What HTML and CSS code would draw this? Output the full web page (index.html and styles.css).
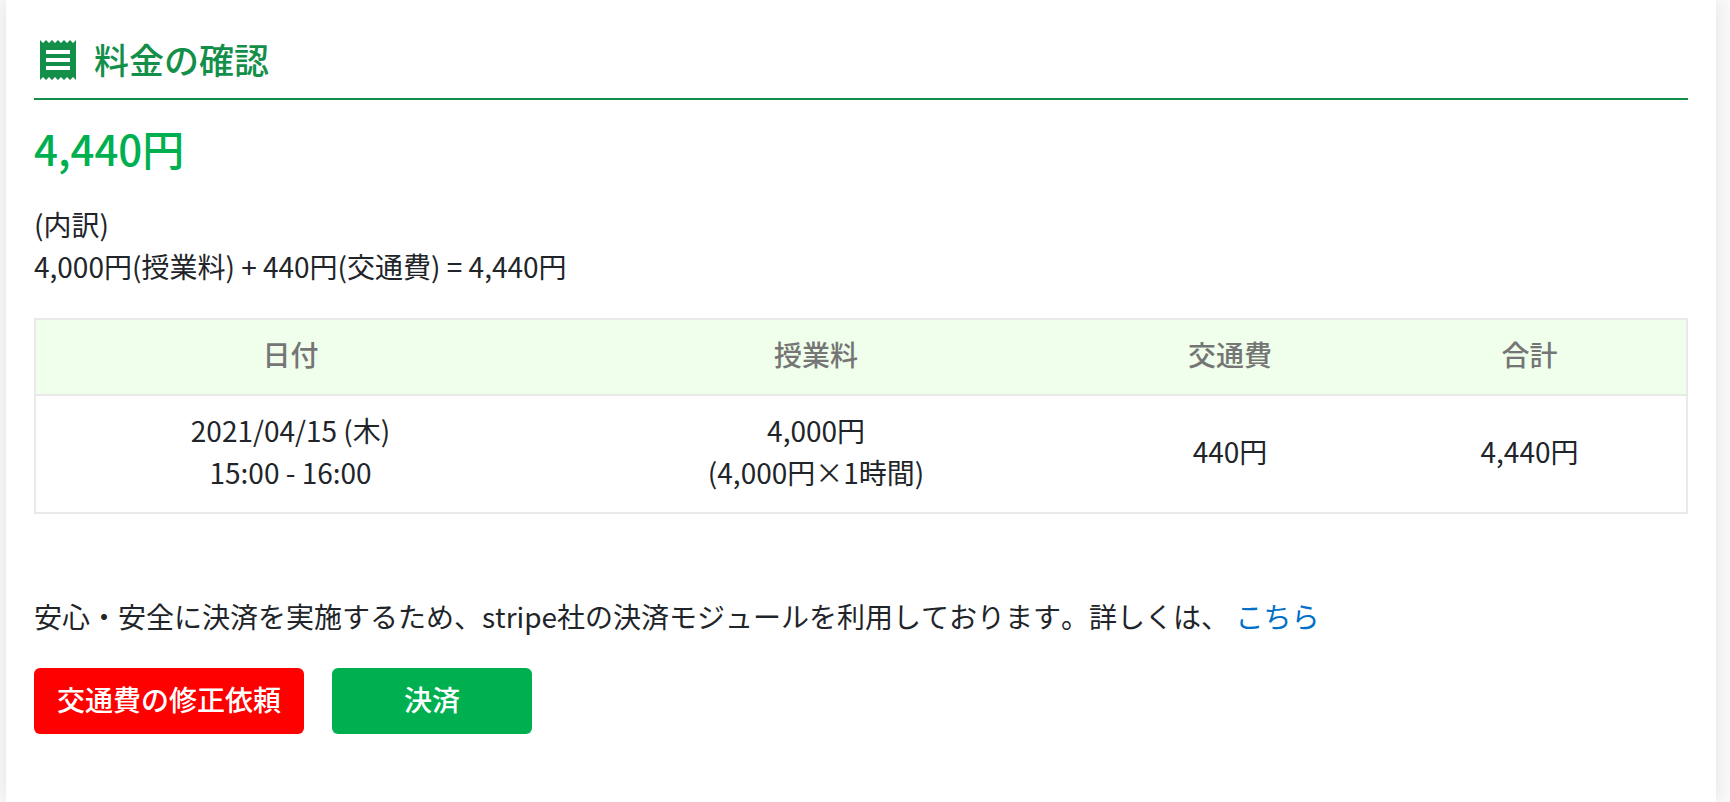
FILE: index.html
```html
<!DOCTYPE html>
<html lang="ja">
<head>
<meta charset="utf-8">
<meta name="viewport" content="width=device-width, initial-scale=1">
<title>料金の確認</title>
<link rel="stylesheet" href="styles.css">
</head>
<body>
<main class="card">
  <h1 class="card-title">
    <svg class="card-icon" viewBox="0 0 24 24" aria-hidden="true"><path d="M18 17H6v-2h12v2zm0-4H6v-2h12v2zm0-4H6V7h12v2zM3 22l1.5-1.5L6 22l1.500-1.500L9 22l1.500-1.500L12 22l1.500-1.500L15 22l1.500-1.500L18 22l1.500-1.500L21 22V2l-1.500 1.500L18 2l-1.500 1.500L15 2l-1.500 1.500L12 2l-1.500 1.500L9 2 7.500 3.500 6 2 4.500 3.500 3 2v20z"/></svg>
    <span class="card-heading">料金の確認</span>
  </h1>
  <p class="amount">4,440円</p>
  <p class="breakdown">(内訳)<br>4,000円(授業料) + 440円(交通費) = 4,440円</p>
  <table class="fees">
    <thead>
      <tr><th scope="col">日付</th><th scope="col">授業料</th><th scope="col">交通費</th><th scope="col">合計</th></tr>
    </thead>
    <tbody>
      <tr>
        <td>2021/04/15 (木)<br>15:00 - 16:00</td>
        <td>4,000円<br>(4,000円×1時間)</td>
        <td>440円</td>
        <td>4,440円</td>
      </tr>
    </tbody>
  </table>
  <p class="notice">安心・安全に決済を実施するため、stripe社の決済モジュールを利用しております。詳しくは、 <a class="link" href="#">こちら</a></p>
  <div class="actions">
    <button class="button button-danger" type="button">交通費の修正依頼</button>
    <button class="button button-primary" type="button">決済</button>
  </div>
</main>
</body>
</html>
```
FILE: styles.css
```css
* {
  box-sizing: border-box;
}

body {
  margin: 0;
  padding: 0 14px 0 6px;
  background: #fafafa;
  color: #212529;
  font-family: "Noto Sans CJK JP", sans-serif;
  font-size: 28px;
  line-height: 42px;
}

.card {
  min-height: 100vh;
  padding: 22px 28px 68px;
  background: #fff;
  box-shadow: 0 0 20px rgba(0, 0, 0, 0.1);
}

.card-title {
  display: flex;
  align-items: center;
  gap: 12px;
  margin: 0;
  padding: 14px 0;
  border-bottom: 2px solid #148f4a;
  color: #148f4a;
  font-size: 35px;
  font-weight: 500;
  line-height: 46px;
}

.card-heading {
  padding-bottom: 2px;
}

.card-icon {
  width: 48px;
  height: 48px;
  fill: currentColor;
}

.amount {
  margin: 18px 0 25px;
  color: #00b050;
  font-size: 42px;
  font-weight: 500;
  line-height: 60px;
}

.breakdown {
  margin: 0 0 31px;
}

.fees {
  width: 100%;
  border: 2px solid #e9e9e9;
  border-collapse: separate;
  border-spacing: 0;
  text-align: center;
}

.fees th,
.fees td {
  padding: 13px 32px 19px;
  vertical-align: middle;
}

.fees th {
  border-bottom: 2px solid #e9e9e9;
  background: #efffeb;
  color: #757575;
  font-weight: 500;
}

.notice {
  margin: 81px 0 31px;
  font-kerning: none;
}

.link {
  color: #0070c9;
  text-decoration: none;
}

.actions {
  display: flex;
  flex-wrap: wrap;
  gap: 28px;
}

.button {
  min-width: 200px;
  padding: 10px 23px 14px;
  border: 0;
  border-radius: 6px;
  color: #fff;
  font: inherit;
  font-weight: 500;
}

.button-danger {
  background: #f00;
}

.button-primary {
  background: #00b050;
}
```
